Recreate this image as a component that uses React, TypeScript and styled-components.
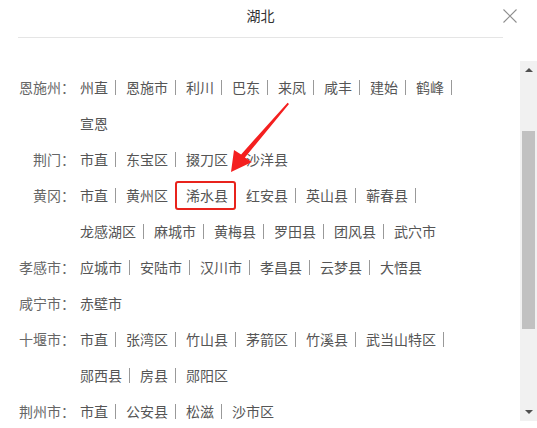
import React, { useLayoutEffect, useRef, useState } from 'react';
import styled, { createGlobalStyle } from 'styled-components';

interface City {
  name: string;
  areas: string[];
}

const cities: City[] = [
  { name: '武汉市', areas: ['江岸区', '江汉区', '硚口区', '汉阳区', '武昌区', '青山区'] },
  { name: '黄石市', areas: ['市直', '大冶市', '阳新县', '铁山区', '下陆区'] },
  { name: '恩施州', areas: ['州直', '恩施市', '利川', '巴东', '来凤', '咸丰', '建始', '鹤峰', '宣恩'] },
  { name: '荆门', areas: ['市直', '东宝区', '掇刀区', '沙洋县'] },
  {
    name: '黄冈',
    areas: ['市直', '黄州区', '浠水县', '红安县', '英山县', '蕲春县', '龙感湖区', '麻城市', '黄梅县', '罗田县', '团风县', '武穴市'],
  },
  { name: '孝感市', areas: ['应城市', '安陆市', '汉川市', '孝昌县', '云梦县', '大悟县'] },
  { name: '咸宁市', areas: ['赤壁市'] },
  { name: '十堰市', areas: ['市直', '张湾区', '竹山县', '茅箭区', '竹溪县', '武当山特区', '郧西县', '房县', '郧阳区'] },
  { name: '荆州市', areas: ['市直', '公安县', '松滋', '沙市区'] },
  { name: '宜昌市', areas: ['市直', '宜都市', '当阳市', '枝江市', '远安县', '兴山县'] },
  { name: '襄阳市', areas: ['市直', '襄州区', '枣阳市', '宜城市', '南漳县', '谷城县'] },
  { name: '随州市', areas: ['曾都区', '广水市', '随县'] },
];

const marked = '浠水县';
const BUTTON = 17;

const App = () => {
  const viewRef = useRef<HTMLDivElement>(null);
  const [thumb, setThumb] = useState({ top: 0, height: 0 });

  const measure = () => {
    const el = viewRef.current;
    if (!el) return;
    const track = el.clientHeight - BUTTON * 2;
    const height = Math.max(20, (track * el.clientHeight) / el.scrollHeight);
    const max = el.scrollHeight - el.clientHeight;
    const top = max > 0 ? ((track - height) * el.scrollTop) / max : 0;
    setThumb({ top, height });
  };

  useLayoutEffect(() => {
    if (viewRef.current) viewRef.current.scrollTop = 96;
    measure();
  }, []);

  return (
    <>
      <GlobalStyle />
      <Dialog>
        <Header>
          <Title>湖北</Title>
          <Close aria-label="关闭">
            <svg width="14" height="14" viewBox="0 0 14 14">
              <path d="M0.5 0.5L13.5 13.5M13.5 0.5L0.5 13.5" stroke="#8e8e8e" strokeWidth="1.1" fill="none" />
            </svg>
          </Close>
        </Header>
        <Body>
          <Viewport ref={viewRef} onScroll={measure}>
            <List>
              {cities.map((city) => (
                <Row key={city.name}>
                  <Label>{city.name}：</Label>
                  <Areas>
                    {city.areas.map((area, i) => {
                      const last = i === city.areas.length - 1;
                      const isMarked = area === marked;
                      const beforeMarked = city.areas[i + 1] === marked;
                      return (
                        <Area key={area} $marked={isMarked}>
                          {area}
                          {!last && <Bar $hidden={isMarked || beforeMarked} />}
                          {isMarked && (
                            <Arrow width="62" height="74" viewBox="0 0 62 74">
                              <polygon
                                points="1,71 4,49 11.1,53.4 57.6,1.8 59,2.9 14.9,56.6 22,61"
                                fill="#f41f1f"
                              />
                            </Arrow>
                          )}
                        </Area>
                      );
                    })}
                  </Areas>
                </Row>
              ))}
            </List>
          </Viewport>
          <ScrollBar>
            <ScrollButton $dir="up" />
            <Track>
              <Thumb style={{ marginTop: thumb.top, height: thumb.height }} />
            </Track>
            <ScrollButton $dir="down" />
          </ScrollBar>
        </Body>
      </Dialog>
    </>
  );
};

export default App;

const GlobalStyle = createGlobalStyle`
  html, body {
    margin: 0;
    background: #fff;
  }

  body {
    font-family: "Noto Sans CJK SC", "Noto Sans", sans-serif;
  }
`;

const Dialog = styled.div`
  width: 537px;
  height: 428px;
  display: flex;
  flex-direction: column;
  background: #fff;
  overflow: hidden;
`;

const Header = styled.header`
  flex: none;
  display: grid;
  grid-template-columns: 1fr 34px;
  padding-left: 18px;
`;

const Title = styled.h2`
  margin: 0;
  height: 37px;
  line-height: 30px;
  text-align: center;
  font-size: 14px;
  font-weight: normal;
  color: #333;
  border-bottom: 1px solid #e5e5e5;
`;

const Close = styled.button`
  margin-top: 9px;
  width: 14px;
  height: 14px;
  padding: 0;
  border: none;
  background: none;
  display: flex;
  cursor: pointer;
`;

const Body = styled.div`
  flex: none;
  display: flex;
  margin-top: 23px;
  height: 360px;
`;

const Viewport = styled.div`
  flex: 1;
  overflow-y: auto;
  scrollbar-width: none;

  &::-webkit-scrollbar {
    display: none;
  }
`;

const ScrollBar = styled.div`
  flex: 0 0 17px;
  display: flex;
  flex-direction: column;
  background: #f1f1f1;
`;

const ScrollButton = styled.div<{ $dir: 'up' | 'down' }>`
  flex: 0 0 17px;
  display: flex;
  justify-content: center;
  align-items: ${(props) => (props.$dir === 'up' ? 'flex-start' : 'flex-end')};
  padding: ${(props) => (props.$dir === 'up' ? '7px 0 0' : '0 0 7px')};
  box-sizing: border-box;

  &::before {
    content: '';
    width: 0;
    height: 0;
    border-left: 4px solid transparent;
    border-right: 4px solid transparent;
    ${(props) => (props.$dir === 'up' ? 'border-bottom' : 'border-top')}: 4px solid #505050;
  }
`;

const Track = styled.div`
  flex: 1;
  display: flex;
  flex-direction: column;
`;

const Thumb = styled.div`
  flex: none;
  margin: 0 2px;
  background: #c1c1c1;
`;

const List = styled.div`
  padding: 32px 0 21px;
`;

const Row = styled.div`
  display: flex;
  align-items: flex-start;
`;

const Label = styled.span`
  flex: 0 0 75px;
  margin-right: 5px;
  text-align: right;
  line-height: 36px;
  font-size: 14px;
  color: #666;
  white-space: nowrap;
`;

const Areas = styled.div`
  flex: 0 0 390px;
  display: flex;
  flex-wrap: wrap;
  column-gap: 10px;
`;

const Area = styled.span<{ $marked?: boolean }>`
  position: relative;
  display: inline-flex;
  align-items: center;
  height: 36px;
  font-size: 14px;
  color: #555;
  cursor: pointer;
  white-space: nowrap;

  ${(props) =>
    props.$marked &&
    `
    &::after {
      content: '';
      position: absolute;
      left: -11px;
      right: 0;
      top: 4px;
      bottom: 3px;
      border: 2px solid #e8231c;
      border-radius: 3px;
    }
  `}
`;

const Bar = styled.i<{ $hidden?: boolean }>`
  width: 1px;
  height: 15px;
  margin-left: 7px;
  background: #999;
  visibility: ${(props) => (props.$hidden ? 'hidden' : 'visible')};
`;

const Arrow = styled.svg`
  position: absolute;
  left: 44px;
  top: -76px;
  pointer-events: none;
  z-index: 1;
`;
